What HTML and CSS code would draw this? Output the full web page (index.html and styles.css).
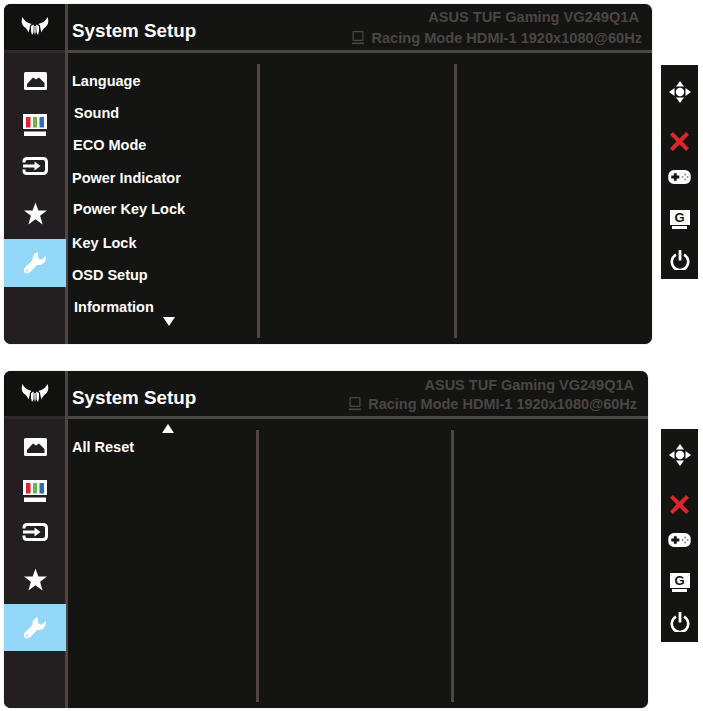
FILE: index.html
```html
<!DOCTYPE html>
<html lang="en">
<head>
<meta charset="utf-8">
<title>System Setup</title>
<link rel="stylesheet" href="styles.css">
</head>
<body>
<svg class="defs" width="0" height="0" aria-hidden="true">
  <symbol id="i-logo" viewBox="0 0 28 18">
    <path fill="#fff" d="M1.500 0 C0 4 0.500 8 4 10.500 C5.500 11.500 6.500 13 7.500 15.500 L8.500 12 L9 8.500 L10.500 7 C7 6 3.500 4.500 1.500 0Z"/>
    <path fill="#fff" d="M26.500 0 C28 4 27.500 8 24 10.500 C22.500 11.500 21.500 13 20.500 15.500 L19.500 12 L19 8.500 L17.500 7 C21 6 24.500 4.500 26.500 0Z"/>
    <path fill="#fff" d="M10 9 L12.800 7.500 L12.500 15.500 L11 18 L10 14Z M15.200 7.500 L18 9 L18 14 L17 18 L15.500 15.500Z M13.300 9 H14.700 V15 L14 18 L13.300 15Z"/>
  </symbol>
  <symbol id="i-picture" viewBox="0 0 23 18">
    <rect width="23" height="18" rx="1.500" fill="#fff"/>
    <path fill="#231f20" d="M3 15 V12 L9 5.500 L12 7.500 L15 5.500 L20.500 11 V15 Z"/>
  </symbol>
  <symbol id="i-color" viewBox="0 0 24 22">
    <rect width="24" height="15" fill="#fff"/>
    <rect x="3" y="3" width="4.500" height="10.500" fill="#e8202c"/>
    <rect x="10" y="3" width="4" height="10.500" fill="#6cb544"/>
    <rect x="16.500" y="3" width="4.500" height="10.500" fill="#2f6db5"/>
    <rect x="1" y="17.500" width="22" height="4.500" fill="#fff"/>
  </symbol>
  <symbol id="i-input" viewBox="0 0 26 18">
    <path fill="none" stroke="#fff" stroke-width="3" d="M2 5.500 V4.500 Q2 1.500 5 1.500 H21 Q24.500 1.500 24.500 5 V13 Q24.500 16.500 21 16.500 H5 Q2 16.500 2 13.500 V12.500"/>
    <path fill="#fff" d="M1 7.600 H12.500 V4.500 L18.500 9 L12.500 13.500 V10.400 H1Z"/>
  </symbol>
  <symbol id="i-star" viewBox="0 0 24 23">
    <path fill="#fff" d="M12 0 L15 8.400 H24 L16.800 13.800 L19.400 23 L12 17.600 L4.600 23 L7.200 13.800 L0 8.400 H9Z"/>
  </symbol>
  <symbol id="i-wrench" viewBox="0 0 22 22">
    <path fill="#fff" d="M14 0.300 C10.500 0.600 8 4 8.600 8 L1 15.400 C-0.600 17 -0.400 19.400 0.800 20.600 C2.200 22 4.400 21.800 6 20.200 L13.200 13 C17.600 13.800 22 10.600 22 5.500 C22 5 21.900 4.400 21.700 4 L17.600 7.800 L14.600 6.800 L14 4Z"/>
    <circle cx="3" cy="18.800" r="0.800" fill="#8fa9b8"/>
  </symbol>
  <symbol id="i-move" viewBox="0 0 22 22">
    <circle cx="11" cy="11" r="4.200" fill="#fff"/>
    <path fill="#fff" d="M11 0 L15 5.500 H7Z M11 22 L7 16.500 H15Z M0 11 L5.500 7 V15Z M22 11 L16.500 7 V15Z"/>
  </symbol>
  <symbol id="i-close" viewBox="0 0 20 20">
    <path fill="#d9272e" d="M0 3 L3 0 L10 6.800 L17 0 L20 3 L13.200 10 L20 17 L17 20 L10 13.200 L3 20 L0 17 L6.800 10Z"/>
  </symbol>
  <symbol id="i-pad" viewBox="0 0 24 15">
    <rect width="24" height="15" rx="6" fill="#fff"/>
    <path fill="#141413" d="M6 3.500 H9 V6 H11.800 V9 H9 V11.500 H6 V9 H3.200 V6 H6Z"/>
    <circle cx="18" cy="4.800" r="1" fill="#8a8a8a"/>
    <circle cx="18" cy="10.200" r="1" fill="#8a8a8a"/>
    <circle cx="15.300" cy="7.500" r="1" fill="#8a8a8a"/>
    <circle cx="20.700" cy="7.500" r="1" fill="#8a8a8a"/>
  </symbol>
  <symbol id="i-power" viewBox="0 0 20 20">
    <path fill="none" stroke="#fff" stroke-width="2.600" d="M6 4.700 A8.200 8.200 0 1 0 14 4.700"/>
    <rect x="8.600" y="0" width="2.800" height="10.500" fill="#fff"/>
  </symbol>
  <symbol id="i-screen" viewBox="0 0 12 14">
    <path fill="none" stroke="#4b4644" stroke-width="1.200" d="M1.100 0.600 H10.900 V9.400 H1.100Z"/>
    <rect y="11.500" width="12" height="1.600" fill="#4b4644"/>
  </symbol>
</svg>

<section class="row row-a">
  <div class="osd">
    <aside class="side">
      <div class="logo"><svg class="ic-logo"><use href="#i-logo"/></svg></div>
      <div class="tools">
        <svg class="ic ic-picture"><use href="#i-picture"/></svg>
        <svg class="ic ic-color"><use href="#i-color"/></svg>
        <svg class="ic ic-input"><use href="#i-input"/></svg>
        <svg class="ic ic-star"><use href="#i-star"/></svg>
        <div class="active"><svg class="ic-wrench"><use href="#i-wrench"/></svg></div>
      </div>
    </aside>
    <main class="main">
      <header class="head">
        <h1 class="title">System Setup</h1>
        <div class="meta">
          <div class="meta-model">ASUS TUF Gaming VG249Q1A</div>
          <div class="meta-mode"><svg class="ic-screen"><use href="#i-screen"/></svg><span>Racing Mode HDMI-1 1920x1080@60Hz</span></div>
        </div>
      </header>
      <div class="cols">
        <ul class="menu">
          <li class="item item-language">Language</li>
          <li class="item item-sound">Sound</li>
          <li class="item item-eco">ECO Mode</li>
          <li class="item item-indicator">Power Indicator</li>
          <li class="item item-powerlock">Power Key Lock</li>
          <li class="item item-keylock">Key Lock</li>
          <li class="item item-osd">OSD Setup</li>
          <li class="item item-info">Information</li>
          <li class="arrow-down"></li>
        </ul>
        <div class="col"></div>
        <div class="col"></div>
      </div>
    </main>
  </div>
  <nav class="keys">
    <svg class="key-move"><use href="#i-move"/></svg>
    <svg class="key-close"><use href="#i-close"/></svg>
    <svg class="key-pad"><use href="#i-pad"/></svg>
    <div class="key-g"><span class="key-g-face">G</span></div>
    <svg class="key-power"><use href="#i-power"/></svg>
  </nav>
</section>

<section class="row row-b">
  <div class="osd">
    <aside class="side">
      <div class="logo"><svg class="ic-logo"><use href="#i-logo"/></svg></div>
      <div class="tools">
        <svg class="ic ic-picture"><use href="#i-picture"/></svg>
        <svg class="ic ic-color"><use href="#i-color"/></svg>
        <svg class="ic ic-input"><use href="#i-input"/></svg>
        <svg class="ic ic-star"><use href="#i-star"/></svg>
        <div class="active"><svg class="ic-wrench"><use href="#i-wrench"/></svg></div>
      </div>
    </aside>
    <main class="main">
      <header class="head">
        <h1 class="title">System Setup</h1>
        <div class="meta">
          <div class="meta-model">ASUS TUF Gaming VG249Q1A</div>
          <div class="meta-mode"><svg class="ic-screen"><use href="#i-screen"/></svg><span>Racing Mode HDMI-1 1920x1080@60Hz</span></div>
        </div>
      </header>
      <div class="cols">
        <ul class="menu">
          <li class="arrow-up"></li>
          <li class="item item-reset">All Reset</li>
        </ul>
        <div class="col"></div>
        <div class="col"></div>
      </div>
    </main>
  </div>
  <nav class="keys">
    <svg class="key-move"><use href="#i-move"/></svg>
    <svg class="key-close"><use href="#i-close"/></svg>
    <svg class="key-pad"><use href="#i-pad"/></svg>
    <div class="key-g"><span class="key-g-face">G</span></div>
    <svg class="key-power"><use href="#i-power"/></svg>
  </nav>
</section>
</body>
</html>
```

FILE: styles.css
```css
* { box-sizing: border-box; }

html, body {
  margin: 0;
  padding: 0;
  background: #fff;
  font-family: "Liberation Sans", Arial, sans-serif;
}

body {
  width: 703px;
  height: 711px;
  overflow: hidden;
}

.defs { position: absolute; }

.row {
  display: flex;
  align-items: flex-start;
}

.row-a { padding: 4px 0 0 4px; }
.row-b { padding: 27px 0 0 4px; }

/* OSD window */
.osd {
  display: flex;
  background: #141413;
  border-radius: 7px;
  overflow: hidden;
  box-shadow: 0 0 1px #777;
}

.row-a .osd { width: 648px; height: 340px; }
.row-b .osd { width: 644px; height: 337px; }

/* Left rail */
.side {
  width: 64px;
  flex: none;
  display: flex;
  flex-direction: column;
  background: #231f20;
  border-right: 3px solid #4d4644;
}

.logo {
  flex: none;
  display: flex;
  align-items: center;
  justify-content: center;
  height: 46px;
  background: #111110;
  padding-bottom: 2px;
}

.row-b .logo { height: 45px; }

.ic-logo { width: 28px; height: 18px; }

.tools {
  flex: 1;
  display: flex;
  flex-direction: column;
  align-items: center;
  padding-left: 1px;
  border-top: 3px solid #2e2a2a;
}

.ic { flex: none; display: block; }
.ic-picture { width: 23px; height: 18px; margin-top: 19px; }
.ic-color { width: 24px; height: 22px; margin-top: 24px; }
.ic-input { width: 26px; height: 18px; margin-top: 21px; }
.ic-star { width: 23px; height: 23px; margin-top: 27px; }

.active {
  display: flex;
  align-items: center;
  justify-content: center;
  align-self: flex-start;
  width: 62px;
  height: 48px;
  margin-top: 14px;
  margin-left: -1px;
  background: #93d8f8;
}

.row-b .active { height: 47px; margin-top: 13px; }

.ic-wrench { width: 22px; height: 22px; }

/* Main */
.main {
  flex: 1;
  min-width: 0;
  display: flex;
  flex-direction: column;
}

.head {
  flex: none;
  display: flex;
  justify-content: space-between;
  height: 49px;
  padding: 0 10px 0 4px;
  border-bottom: 3px solid #4d4644;
}

.row-b .head { height: 48px; padding: 0 11px 0 4px; }

.title {
  margin: 15px 0 0;
  font-size: 18.800px;
  line-height: 24px;
  font-weight: 700;
  color: #fff;
}

.meta {
  color: #4b4644;
  font-weight: 700;
  font-size: 14.600px;
  text-align: right;
}

.row-b .meta { font-size: 14.500px; }

.meta-model {
  line-height: 18px;
  margin-top: 4px;
  padding-right: 3px;
}

.row-b .meta-model { margin-top: 5px; }

.meta-mode {
  display: flex;
  align-items: center;
  justify-content: flex-end;
  gap: 7px;
  line-height: 18px;
  margin-top: 3px;
}

.row-b .meta-mode { margin-top: 1px; }

.ic-screen { width: 12px; height: 14px; }

/* Columns */
.cols {
  flex: 1;
  display: flex;
  padding-top: 11px;
  padding-bottom: 6px;
}

.menu {
  flex: none;
  width: 189px;
  margin: 0;
  padding: 0;
  list-style: none;
  display: flex;
  flex-direction: column;
}

.row-b .menu { width: 188px; }

.col {
  flex: none;
  width: 197px;
  border-left: 3px solid #4d4644;
}

.row-b .col { width: 195px; }

.item {
  color: #fff;
  font-size: 14.500px;
  font-weight: 700;
  line-height: 18px;
  margin-left: 4px;
}

.item-language { margin-top: 8px; }
.item-sound { margin-top: 14px; margin-left: 6px; }
.item-eco { margin-top: 14px; margin-left: 5px; }
.item-indicator { margin-top: 15px; }
.item-powerlock { margin-top: 13px; margin-left: 5px; }
.item-keylock { margin-top: 16px; }
.item-osd { margin-top: 14px; }
.item-info { margin-top: 14px; margin-left: 6px; }

.item-reset { margin-top: 5px; }

.arrow-down,
.arrow-up {
  width: 0;
  height: 0;
  border-left: 6px solid transparent;
  border-right: 6px solid transparent;
}

.arrow-down {
  margin: 1px 0 0 95px;
  border-top: 9px solid #fff;
}

.arrow-up {
  margin: -6px 0 0 94px;
  border-bottom: 9px solid #fff;
}

/* Key strip */
.keys {
  flex: none;
  display: flex;
  flex-direction: column;
  align-items: center;
  width: 37px;
  height: 214px;
  margin-left: 9px;
  background: #141413;
}

.row-a .keys { margin-top: 61px; }
.row-b .keys { margin-top: 58px; margin-left: 13px; height: 213px; }

.key-move { width: 22px; height: 22px; margin-top: 16px; }
.row-b .key-move { margin-top: 15px; }
.key-close { width: 19px; height: 19px; margin-top: 29px; }
.key-pad { width: 23px; height: 14px; margin-top: 19px; }

.key-g {
  display: flex;
  flex-direction: column;
  align-items: center;
  width: 20px;
  height: 19px;
  margin-top: 26px;
}

.key-g::after {
  content: "";
  width: 15px;
  height: 3px;
  margin-top: 1px;
  background: #fff;
}

.key-g-face {
  display: block;
  width: 20px;
  height: 15px;
  background: #fff;
  color: #141413;
  font-size: 13px;
  line-height: 15px;
  font-weight: 700;
  text-align: center;
}

.key-power { width: 20px; height: 20px; margin-top: 21px; }
.row-b .key-power { margin-top: 20px; }
```
